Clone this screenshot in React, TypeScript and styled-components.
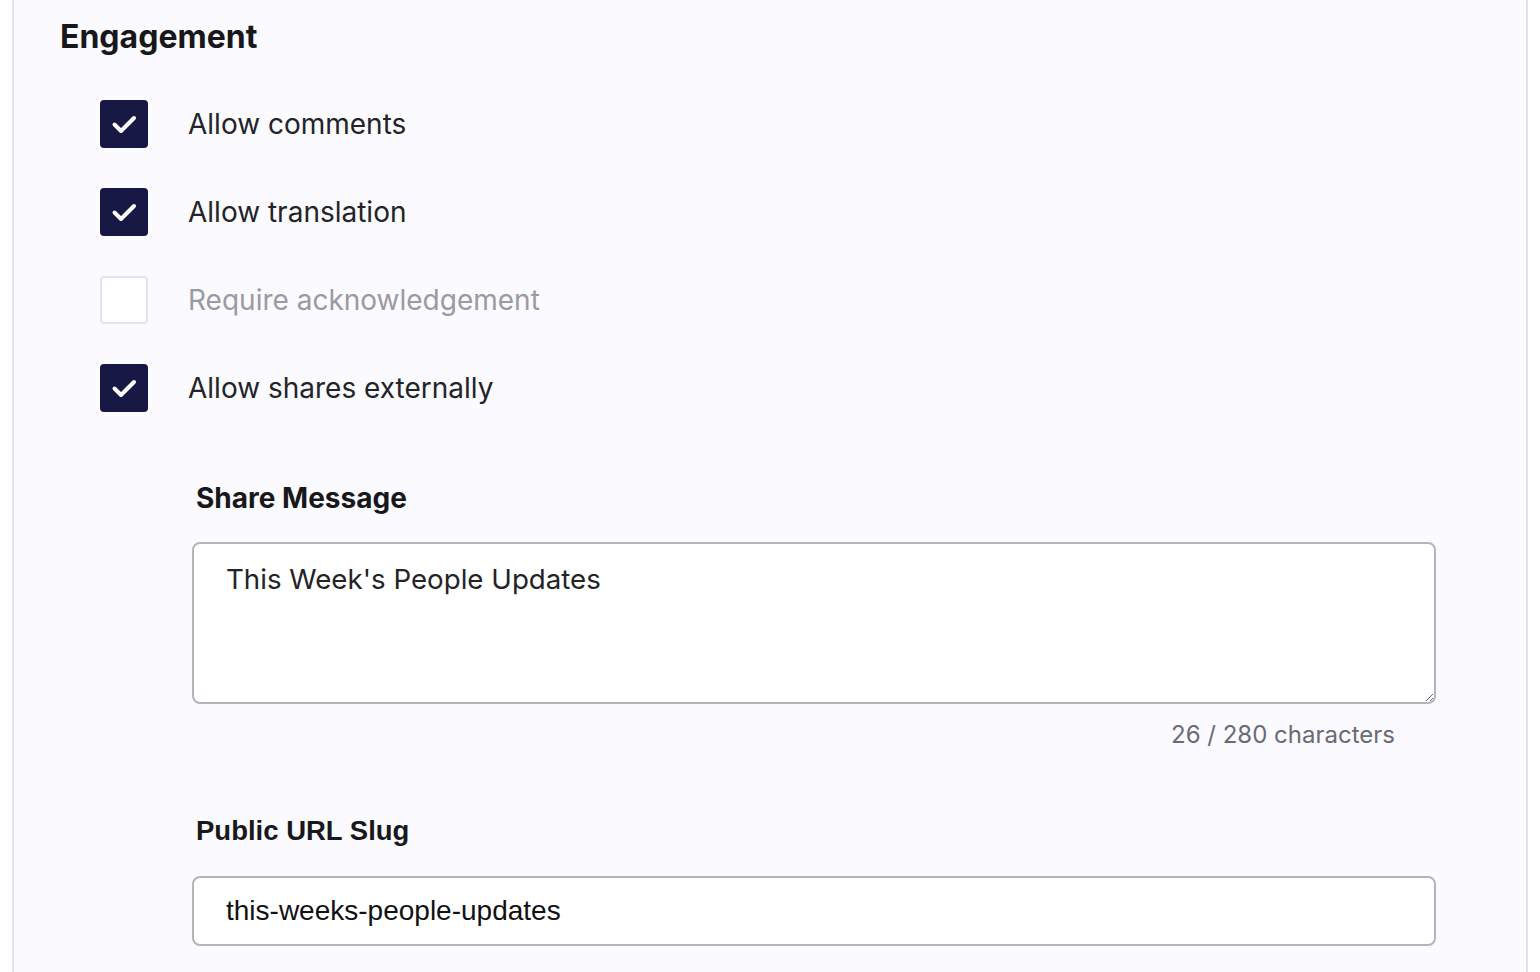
import React from 'react';
import styled, { createGlobalStyle } from 'styled-components';

const GlobalStyle = createGlobalStyle`
  html, body {
    margin: 0;
    padding: 0;
    background-color: #ffffff;
  }
  * {
    box-sizing: border-box;
  }
`;

type Option = {
  label: string;
  checked: boolean;
  disabled?: boolean;
};

const options: Option[] = [
  { label: 'Allow comments', checked: true },
  { label: 'Allow translation', checked: true },
  { label: 'Require acknowledgement', checked: false, disabled: true },
  { label: 'Allow shares externally', checked: true },
];

const shareMessage = "This Week's People Updates";

export default function App() {
  return (
    <>
      <GlobalStyle />
      <Panel>
        <Heading>Engagement</Heading>
        <CheckList>
          {options.map((o) => (
            <CheckRow key={o.label}>
              <Box $checked={o.checked}>
                {o.checked && (
                  <svg width="48" height="48" viewBox="0 0 48 48">
                    <polyline
                      points="14.5,24.5 21,31 34,18"
                      fill="none"
                      stroke="#ffffff"
                      strokeWidth="4"
                      strokeLinecap="round"
                      strokeLinejoin="round"
                    />
                  </svg>
                )}
              </Box>
              <CheckLabel $disabled={o.disabled}>{o.label}</CheckLabel>
            </CheckRow>
          ))}
        </CheckList>

        <ShareSection>
          <FieldLabel>Share Message</FieldLabel>
          <MessageBox defaultValue={shareMessage} />
          <Counter>{shareMessage.length} / 280 characters</Counter>

          <SlugLabel>Public URL Slug</SlugLabel>
          <SlugInput defaultValue="this-weeks-people-updates" />
        </ShareSection>
      </Panel>
    </>
  );
}

const Panel = styled.div`
  margin: 0 12px;
  min-height: 100vh;
  background-color: #fafaff;
  border-left: 2px solid #e2e2ea;
  border-right: 2px solid #e2e2ea;
  padding: 20px 0 40px 46px;
  font-family: 'Inter', 'Liberation Sans', sans-serif;
`;

const Heading = styled.h2`
  margin: 0;
  font-size: 32px;
  line-height: 34px;
  font-weight: 700;
  color: #18181b;
`;

const CheckList = styled.div`
  margin: 46px 0 0 40px;
  display: flex;
  flex-direction: column;
  gap: 40px;
`;

const CheckRow = styled.label`
  display: flex;
  align-items: center;
  gap: 40px;
  height: 48px;
`;

const Box = styled.span<{ $checked: boolean }>`
  width: 48px;
  height: 48px;
  flex: none;
  border-radius: 4px;
  display: flex;
  align-items: center;
  justify-content: center;
  background-color: ${(p) => (p.$checked ? '#181844' : '#ffffff')};
  border: ${(p) => (p.$checked ? 'none' : '2px solid #e4e4ea')};
`;

const CheckLabel = styled.span<{ $disabled?: boolean }>`
  font-size: 28px;
  line-height: 34px;
  color: ${(p) => (p.$disabled ? '#9a9aa2' : '#232328')};
`;

const ShareSection = styled.div`
  margin: 69px 0 0 132px;
  width: 1244px;
  display: flex;
  flex-direction: column;
`;

const FieldLabel = styled.div`
  padding-left: 4px;
  font-size: 28px;
  line-height: 34px;
  font-weight: 700;
  color: #18181b;
`;

const MessageBox = styled.textarea`
  margin-top: 27px;
  width: 100%;
  height: 162px;
  padding: 14px 32px;
  border: 2px solid #b4b4bb;
  border-radius: 8px;
  background-color: #ffffff;
  font-family: 'Inter', 'Liberation Sans', sans-serif;
  font-size: 27.7px;
  line-height: 42px;
  color: #232328;
  outline: none;
`;

const Counter = styled.div`
  margin: 16px 41px 0 0;
  text-align: right;
  font-size: 24px;
  line-height: 30px;
  color: #6a6a74;
`;

const SlugLabel = styled(FieldLabel)`
  margin-top: 64px;
  font-family: 'Liberation Sans', Arial, sans-serif;
  font-size: 27.5px;
`;

const SlugInput = styled.input`
  margin-top: 28px;
  width: 100%;
  height: 70px;
  padding: 0 32px;
  border: 2px solid #b4b4bb;
  border-radius: 8px;
  background-color: #ffffff;
  font-family: 'Liberation Sans', Arial, sans-serif;
  font-size: 28px;
  color: #111114;
  outline: none;
`;
